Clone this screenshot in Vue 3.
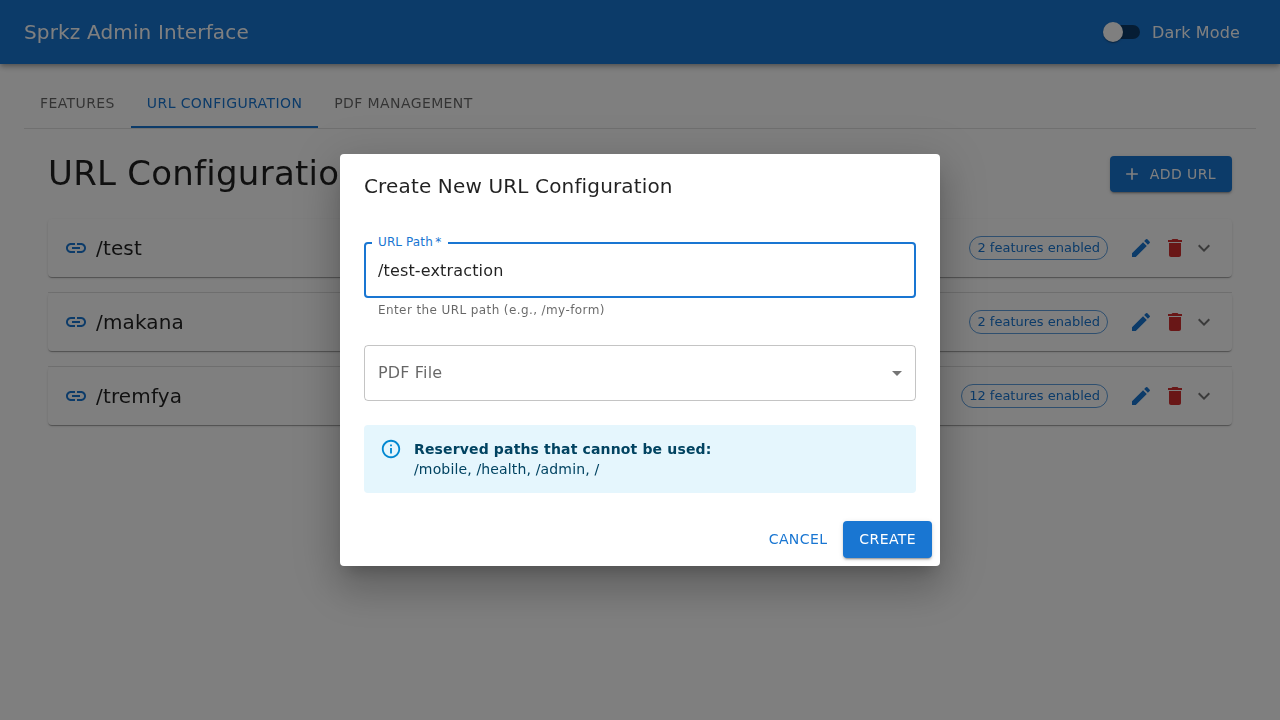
<script setup>
const tabs = [
  { label: "Features" },
  { label: "URL Configuration", active: true },
  { label: "PDF Management" },
];

const urls = [
  { path: "/test", features: 2 },
  { path: "/makana", features: 2 },
  { path: "/tremfya", features: 12 },
];
</script>

<template>
  <div class="page">
    <header class="appbar">
      <div class="appbar-title">Sprkz Admin Interface</div>
      <label class="toggle">
        <span class="switch"><span class="switch-track"></span><span class="switch-thumb"></span></span>
        <span class="toggle-label">Dark Mode</span>
      </label>
    </header>

    <main class="main">
      <nav class="tabs">
        <button v-for="t in tabs" :key="t.label" class="tab" :class="{ active: t.active }">{{ t.label }}</button>
      </nav>

      <section class="content">
        <div class="content-head">
          <h1>URL Configuration</h1>
          <button class="btn btn-primary">
            <svg class="add-icon" viewBox="0 0 24 24"><path d="M19 13h-6v6h-2v-6H5v-2h6V5h2v6h6v2z" /></svg>
            Add URL
          </button>
        </div>

        <div class="url-list">
          <div v-for="u in urls" :key="u.path" class="url-card">
            <svg class="link-icon" viewBox="0 0 24 24"><path d="M3.9 12c0-1.71 1.39-3.1 3.1-3.1h4V7H7c-2.76 0-5 2.24-5 5s2.24 5 5 5h4v-1.9H7c-1.71 0-3.1-1.39-3.1-3.1zM8 13h8v-2H8v2zm9-6h-4v1.9h4c1.71 0 3.1 1.39 3.1 3.1s-1.39 3.1-3.1 3.1h-4V17h4c2.76 0 5-2.24 5-5s-2.24-5-5-5z" /></svg>
            <span class="url-path">{{ u.path }}</span>
            <span class="chip">{{ u.features }} features enabled</span>
            <span class="icon-btn edit">
              <svg viewBox="0 0 24 24"><path d="M3 17.25V21h3.75L17.81 9.94l-3.75-3.75L3 17.25zM20.71 7.04c.39-.39.39-1.02 0-1.41l-2.34-2.34a.9959.9959 0 0 0-1.41 0l-1.83 1.83 3.75 3.75 1.83-1.83z" /></svg>
            </span>
            <span class="icon-btn del">
              <svg viewBox="0 0 24 24"><path d="M6 19c0 1.1.9 2 2 2h8c1.1 0 2-.9 2-2V7H6v12zM19 4h-3.5l-1-1h-5l-1 1H5v2h14V4z" /></svg>
            </span>
            <svg class="expand" viewBox="0 0 24 24"><path d="M16.59 8.59 12 13.17 7.41 8.59 6 10l6 6 6-6z" /></svg>
          </div>
        </div>
      </section>
    </main>

    <div class="backdrop">
      <div class="dialog">
        <h2 class="dialog-title">Create New URL Configuration</h2>
        <div class="dialog-body">
          <div class="field focused">
            <span class="field-label">URL Path&thinsp;*</span>
            <span class="field-value">/test-extraction</span>
          </div>
          <p class="helper">Enter the URL path (e.g., /my-form)</p>

          <div class="field select">
            <span class="placeholder">PDF File</span>
            <svg class="caret" viewBox="0 0 24 24"><path d="M7 10l5 5 5-5z" /></svg>
          </div>

          <div class="alert">
            <svg class="info" viewBox="0 0 24 24"><path d="M11 7h2v2h-2zm0 4h2v6h-2zm1-9C6.48 2 2 6.48 2 12s4.48 10 10 10 10-4.48 10-10S17.52 2 12 2zm0 18c-4.41 0-8-3.59-8-8s3.59-8 8-8 8 3.59 8 8-3.59 8-8 8z" /></svg>
            <div class="alert-text">
              <strong>Reserved paths that cannot be used:</strong>
              <div>/mobile, /health, /admin, /</div>
            </div>
          </div>
        </div>
        <div class="dialog-actions">
          <button class="btn btn-text">Cancel</button>
          <button class="btn btn-primary">Create</button>
        </div>
      </div>
    </div>
  </div>
</template>

<style>
html,
body {
  margin: 0;
  background: #fff;
}
</style>

<style scoped>
.page {
  min-height: 720px;
  font-family: "DejaVu Sans", sans-serif;
  color: rgba(0, 0, 0, 0.87);
}

button {
  font-family: inherit;
  border: 0;
  background: none;
  cursor: pointer;
}

.appbar {
  position: relative;
  z-index: 1;
  will-change: opacity;
  height: 64px;
  box-sizing: border-box;
  padding: 0 24px;
  display: flex;
  align-items: center;
  justify-content: space-between;
  background: #1976d2;
  color: #fff;
  box-shadow: 0 2px 4px -1px rgba(0, 0, 0, 0.2), 0 4px 5px 0 rgba(0, 0, 0, 0.14), 0 1px 10px 0 rgba(0, 0, 0, 0.12);
}

.appbar-title {
  font-size: 20px;
  letter-spacing: 0.15px;
}

.toggle {
  display: flex;
  align-items: center;
  gap: 12px;
  margin-right: 16px;
}

.switch {
  position: relative;
  width: 36px;
  height: 14px;
}

.switch-track {
  display: block;
  height: 100%;
  border-radius: 7px;
  background: rgba(0, 0, 0, 0.5);
}

.switch-thumb {
  position: absolute;
  left: -1px;
  top: -3px;
  width: 20px;
  height: 20px;
  border-radius: 50%;
  background: #fff;
  box-shadow: 0 2px 1px -1px rgba(0, 0, 0, 0.2), 0 1px 1px 0 rgba(0, 0, 0, 0.14), 0 1px 3px 0 rgba(0, 0, 0, 0.12);
}

.toggle-label {
  font-size: 16px;
  letter-spacing: 0.15px;
}

.main {
  will-change: opacity;
  padding: 16px 24px 0;
}

.tabs {
  display: flex;
  height: 49px;
  box-sizing: border-box;
  border-bottom: 1px solid rgba(0, 0, 0, 0.12);
}

.tab {
  height: 48px;
  padding: 0 16px;
  font-size: 14px;
  letter-spacing: 0.4px;
  text-transform: uppercase;
  color: rgba(0, 0, 0, 0.6);
  border-bottom: 2px solid transparent;
}

.tab.active {
  color: #1976d2;
  border-bottom-color: #1976d2;
}

.content {
  padding: 24px;
}

.content-head {
  display: flex;
  align-items: center;
  justify-content: space-between;
  margin-bottom: 24px;
}

h1 {
  margin: 0;
  padding-bottom: 2px;
  font-size: 34px;
  font-weight: 400;
  line-height: 40px;
  letter-spacing: 0.25px;
}

.btn {
  display: inline-flex;
  align-items: center;
  justify-content: center;
  height: 36.5px;
  box-sizing: border-box;
  padding: 0 16px;
  border-radius: 4px;
  font-size: 14px;
  letter-spacing: 0.4px;
  text-transform: uppercase;
}

.btn-primary {
  background: #1976d2;
  color: #fff;
  box-shadow: 0 3px 1px -2px rgba(0, 0, 0, 0.2), 0 2px 2px 0 rgba(0, 0, 0, 0.14), 0 1px 5px 0 rgba(0, 0, 0, 0.12);
}

.btn-text {
  padding: 0 8px;
  color: #1976d2;
}

.add-icon {
  width: 20px;
  height: 20px;
  margin: 0 8px 0 -4px;
  fill: currentColor;
}

.url-list {
  display: flex;
  flex-direction: column;
  gap: 16px;
}

.url-card {
  position: relative;
  display: flex;
  align-items: center;
  height: 58px;
  padding: 0 16px;
  box-sizing: border-box;
  border-radius: 4px;
  background: #fff;
  box-shadow: 0 2px 1px -1px rgba(0, 0, 0, 0.2), 0 1px 1px 0 rgba(0, 0, 0, 0.14), 0 1px 3px 0 rgba(0, 0, 0, 0.12);
}

.url-card + .url-card::before {
  content: "";
  position: absolute;
  left: 0;
  right: 0;
  top: -1px;
  height: 1px;
  background: rgba(0, 0, 0, 0.12);
}

.link-icon {
  width: 24px;
  height: 24px;
  margin-right: 8px;
  fill: #1976d2;
}

.url-path {
  font-size: 20px;
  letter-spacing: 0.15px;
  flex: 1;
}

.chip {
  height: 24px;
  box-sizing: border-box;
  padding: 0 7px 2px;
  margin-right: 16px;
  display: flex;
  align-items: center;
  border: 1px solid rgba(25, 118, 210, 0.7);
  border-radius: 12px;
  font-size: 13px;
  color: #1976d2;
}

.icon-btn {
  width: 34px;
  height: 34px;
  display: flex;
  align-items: center;
  justify-content: center;
}

.icon-btn svg {
  width: 24px;
  height: 24px;
}

.edit svg {
  fill: #1976d2;
}

.del svg {
  fill: #d32f2f;
}

.expand {
  width: 24px;
  height: 24px;
  fill: rgba(0, 0, 0, 0.54);
}

.backdrop {
  position: fixed;
  z-index: 2;
  inset: 0;
  display: flex;
  align-items: center;
  justify-content: center;
  background: rgba(0, 0, 0, 0.5);
}

.dialog {
  width: 600px;
  will-change: opacity;
  border-radius: 4px;
  background: #fff;
  box-shadow: 0 11px 15px -7px rgba(0, 0, 0, 0.2), 0 24px 38px 3px rgba(0, 0, 0, 0.14), 0 9px 46px 8px rgba(0, 0, 0, 0.12);
}

.dialog-title {
  margin: 0;
  padding: 16px 24px;
  font-size: 20px;
  font-weight: 400;
  line-height: 32px;
  letter-spacing: 0.15px;
}

.dialog-body {
  padding: 24px 24px 20px;
}

.field {
  position: relative;
  display: flex;
  align-items: center;
  height: 56px;
  box-sizing: border-box;
  padding: 0 13px;
  border: 1px solid rgba(0, 0, 0, 0.23);
  border-radius: 4px;
  font-size: 16px;
  letter-spacing: 0.15px;
}

.field.focused {
  padding: 0 12px;
  border: 2px solid #1976d2;
}

.field-label {
  position: absolute;
  left: 6px;
  top: -11px;
  padding: 0 7px 0 6px;
  background: #fff;
  font-size: 12px;
  line-height: 18px;
  letter-spacing: 0.11px;
  color: #1976d2;
}

.helper {
  margin: 2px 14px 25px;
  font-size: 12px;
  line-height: 20px;
  letter-spacing: 0.4px;
  color: rgba(0, 0, 0, 0.6);
}

.select {
  justify-content: space-between;
  padding-right: 6px;
}

.placeholder {
  padding-bottom: 2px;
  color: rgba(0, 0, 0, 0.6);
}

.caret {
  width: 24px;
  height: 24px;
  fill: rgba(0, 0, 0, 0.54);
}

.alert {
  display: flex;
  margin-top: 24px;
  padding: 6px 16px;
  border-radius: 4px;
  background: #e5f6fd;
  color: #014361;
  font-size: 14px;
  line-height: 20px;
  letter-spacing: 0.15px;
}

.info {
  width: 22px;
  height: 22px;
  margin: 7px 12px 0 0;
  fill: #0288d1;
}

.alert-text {
  padding: 8px 0;
}

.dialog-actions {
  display: flex;
  justify-content: flex-end;
  gap: 8px;
  padding: 8px;
}

.dialog-actions .btn {
  padding-bottom: 2px;
}
</style>
